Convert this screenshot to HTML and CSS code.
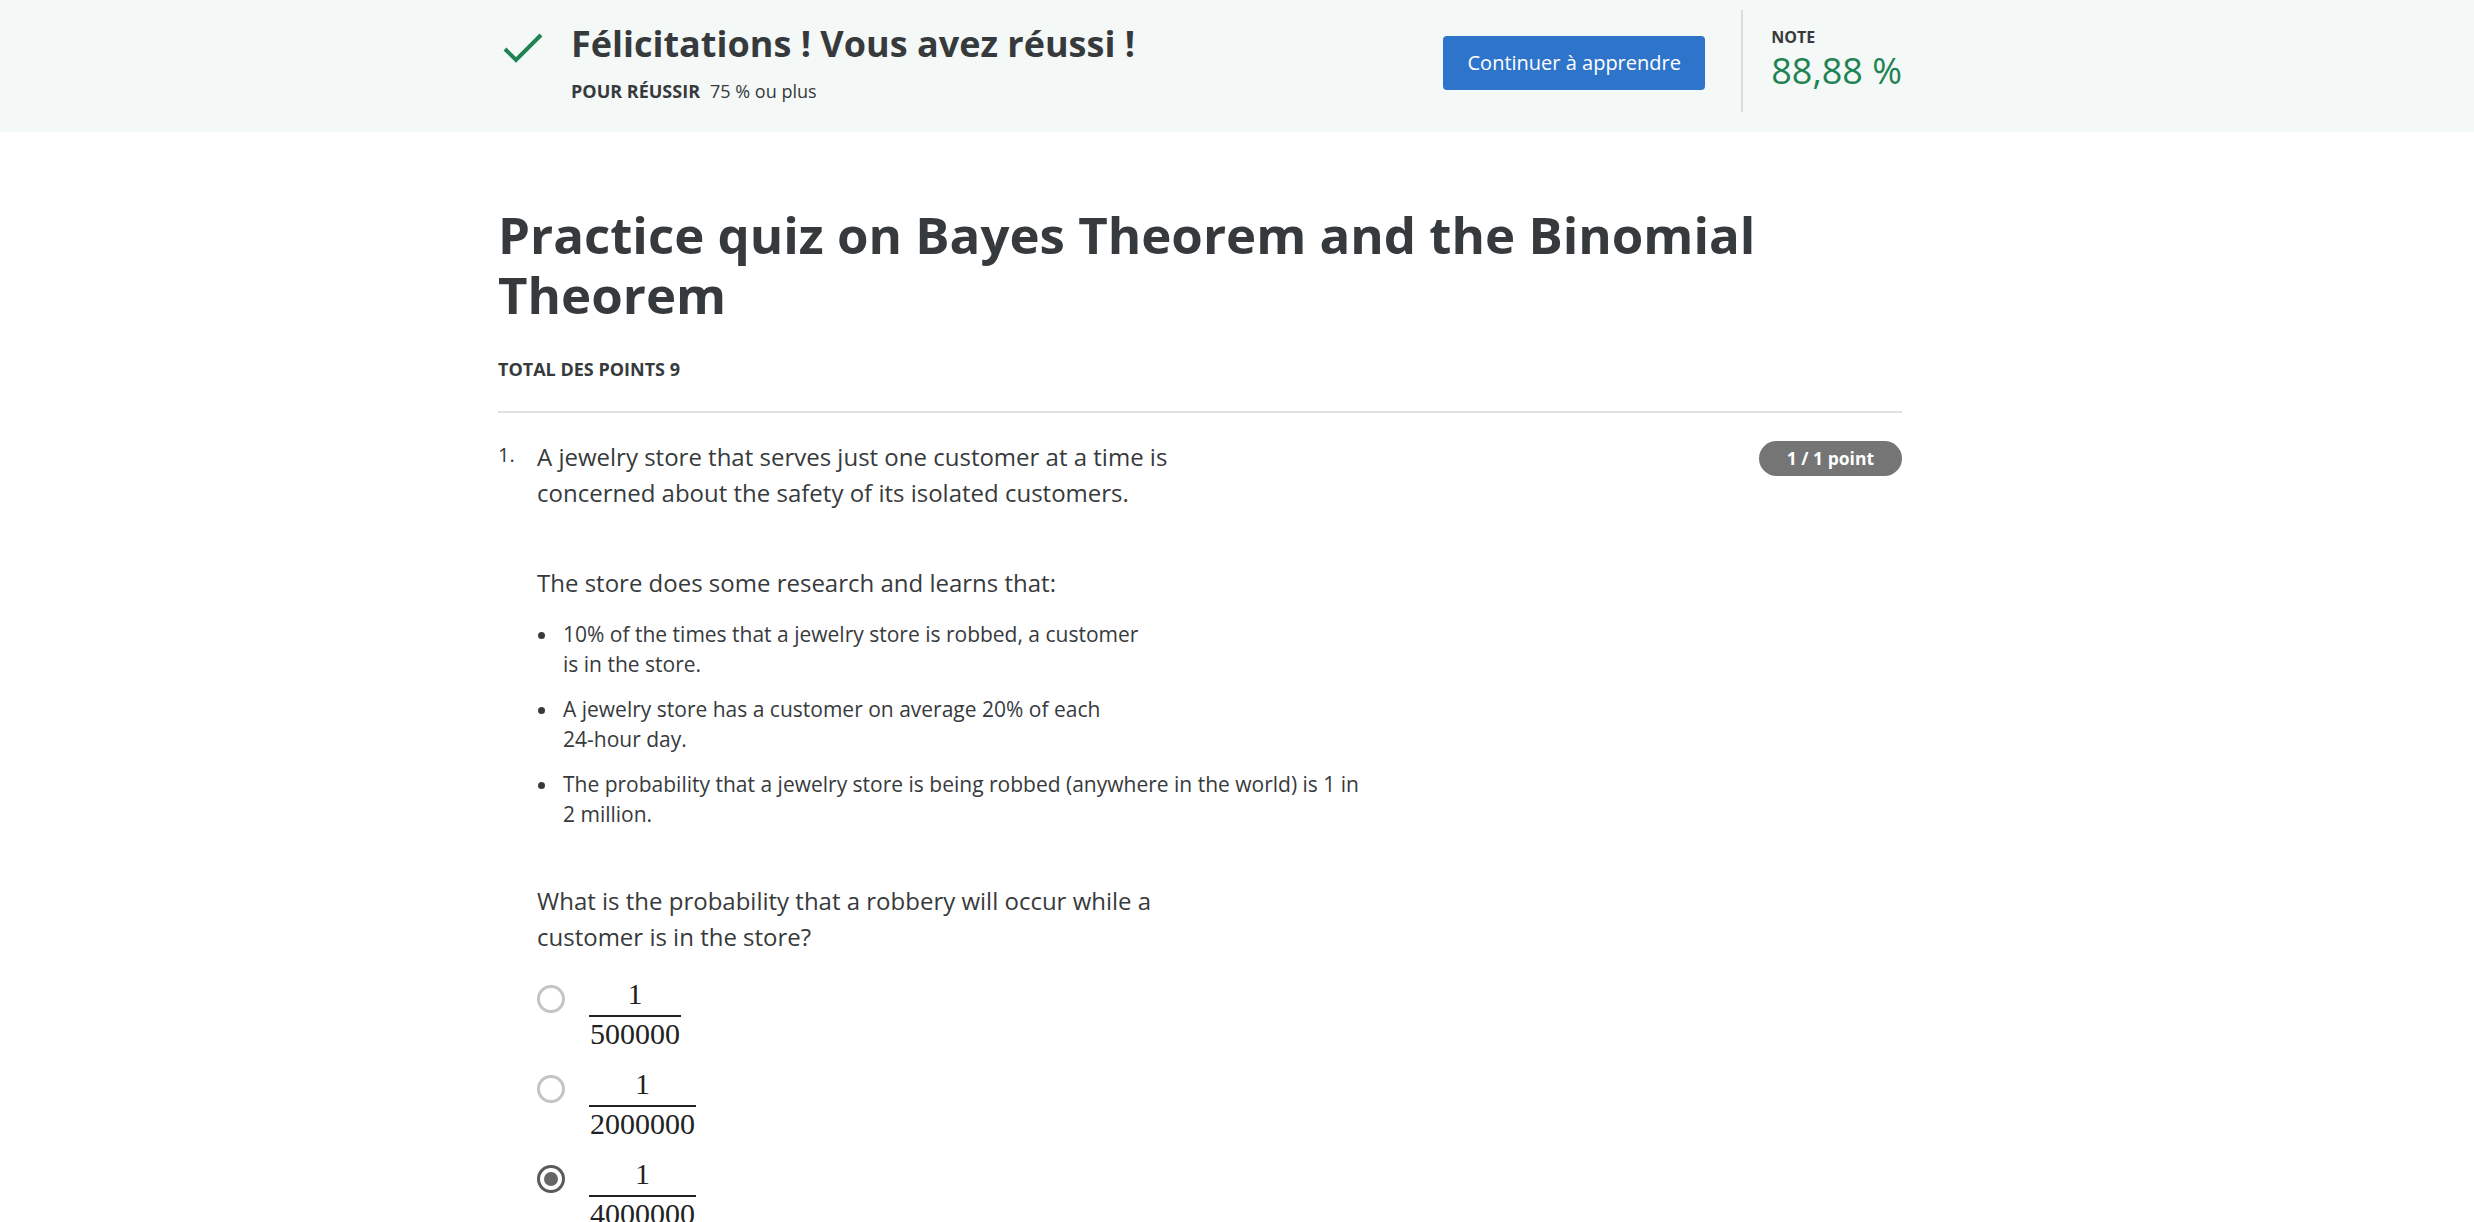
FILE: index.html
```html
<!DOCTYPE html>
<html lang="fr">
<head>
<meta charset="utf-8">
<title>Practice quiz on Bayes Theorem and the Binomial Theorem</title>
<link rel="stylesheet" href="styles.css">
</head>
<body>
<header class="banner">
  <div class="banner-inner">
    <svg class="check" viewBox="0 0 40 30" width="40" height="30" aria-hidden="true">
      <path d="M2 16 L13 27 L38 2" fill="none" stroke="#1f8354" stroke-width="4"/>
    </svg>
    <div class="result">
      <h2 class="result-title">Félicitations ! Vous avez réussi !</h2>
      <div class="result-sub"><span class="pass-label">POUR RÉUSSIR</span><span class="pass-value">75 % ou plus</span></div>
    </div>
    <div class="actions">
      <button class="btn-primary" type="button">Continuer à apprendre</button>
      <div class="grade">
        <div class="grade-label">NOTE</div>
        <div class="grade-value">88,88 %</div>
      </div>
    </div>
  </div>
</header>

<main class="content">
  <h1 class="quiz-title">Practice quiz on Bayes Theorem and the Binomial Theorem</h1>
  <div class="total">TOTAL DES POINTS 9</div>
  <hr class="rule">

  <section class="question">
    <div class="q-num">1.</div>
    <div class="q-body">
      <p class="q-text">A jewelry store that serves just one customer at a time is<br>concerned about the safety of its isolated customers.</p>
      <p class="q-text q-gap">The store does some research and learns that:</p>
      <ul class="facts">
        <li>10% of the times that a jewelry store is robbed, a customer<br>is in the store.</li>
        <li>A jewelry store has a customer on average 20% of each<br>24-hour day.</li>
        <li>The probability that a jewelry store is being robbed (anywhere in the world) is 1 in<br>2 million.</li>
      </ul>
      <p class="q-text q-ask">What is the probability that a robbery will occur while a<br>customer is in the store?</p>
      <div class="options">
        <label class="option"><span class="radio"></span><span class="frac"><span class="num">1</span><span class="den">500000</span></span></label>
        <label class="option"><span class="radio"></span><span class="frac"><span class="num">1</span><span class="den">2000000</span></span></label>
        <label class="option"><span class="radio checked"></span><span class="frac"><span class="num">1</span><span class="den">4000000</span></span></label>
      </div>
    </div>
    <div class="points">1 / 1 point</div>
  </section>
</main>
</body>
</html>
```
FILE: styles.css
```css
html, body {
  margin: 0;
  padding: 0;
  background: #ffffff;
}
body {
  font-family: "Open Sans", "Noto Sans", sans-serif;
  color: #373a3c;
  overflow: hidden;
  height: 1222px;
}

.banner {
  background: #f4f8f7;
  height: 132px;
}
.banner-inner {
  margin-left: 498px;
  width: 1404px;
  display: flex;
  align-items: flex-start;
}
.check {
  margin-top: 33px;
  margin-left: 5px;
  flex: none;
}
.result {
  margin-left: 28px;
  padding-top: 22px;
}
.result-title {
  margin: 0;
  font-size: 36px;
  line-height: 44px;
  font-weight: 700;
}
.result-sub {
  margin-top: 12px;
  font-size: 18px;
  line-height: 26px;
}
.pass-label {
  font-weight: 700;
  font-size: 18px;
  margin-right: 10px;
}
.actions {
  margin-left: auto;
  display: flex;
  align-items: flex-start;
}
.btn-primary {
  margin-top: 36px;
  height: 54px;
  width: 262px;
  background: #2f74cb;
  color: #ffffff;
  border: none;
  border-radius: 4px;
  font-family: "Open Sans", sans-serif;
  font-size: 20px;
  line-height: 54px;
  padding: 0;
}
.grade {
  margin-left: 36px;
  margin-top: 10px;
  height: 102px;
  border-left: 2px solid #dcdcdc;
  padding-left: 28px;
  padding-top: 17px;
  box-sizing: border-box;
}
.grade-label {
  font-size: 16px;
  line-height: 20px;
  font-weight: 700;
}
.grade-value {
  margin-top: 2px;
  font-size: 36px;
  line-height: 44px;
  color: #1f8354;
}

.content {
  margin-left: 498px;
  width: 1404px;
  padding-top: 72px;
}
.quiz-title {
  margin: 0;
  font-size: 51px;
  line-height: 60px;
  font-weight: 700;
}
.total {
  margin-top: 33px;
  font-size: 18px;
  line-height: 24px;
  font-weight: 700;
}
.rule {
  margin: 30px 0 0;
  border: none;
  border-top: 2px solid #e1e1e1;
  height: 0;
}

.question {
  margin-top: 26px;
  display: flex;
  align-items: flex-start;
}
.q-num {
  width: 39px;
  flex: none;
  font-size: 20px;
  line-height: 36px;
  margin-top: -2px;
}
.q-body {
  flex: 1;
}
.q-text {
  margin: 0;
  font-size: 24px;
  line-height: 36px;
}
.q-gap {
  margin-top: 54px;
}
.facts {
  list-style: none;
  margin: 18px 0 0;
  padding: 0;
}
.facts li {
  display: flex;
  font-size: 21px;
  line-height: 30px;
}
.facts li + li {
  margin-top: 15px;
}
.facts li::before {
  content: "";
  flex: none;
  width: 7px;
  height: 7px;
  border-radius: 50%;
  background: #373a3c;
  margin: 13px 18px 0 1px;
}
.q-ask {
  margin-top: 54px;
}
.options {
  margin-top: 24px;
  display: flex;
  flex-direction: column;
  gap: 20px;
}
.option {
  display: flex;
  align-items: flex-start;
}
.radio {
  flex: none;
  width: 28px;
  height: 28px;
  box-sizing: border-box;
  border: 3px solid #c4c4c4;
  border-radius: 50%;
  margin-top: 6px;
  margin-right: 24px;
  display: flex;
  align-items: center;
  justify-content: center;
}
.radio.checked {
  border-color: #5a5a5a;
}
.radio.checked::after {
  content: "";
  width: 14px;
  height: 14px;
  border-radius: 50%;
  background: #666666;
}
.frac {
  display: inline-flex;
  flex-direction: column;
  align-items: center;
  font-family: "Liberation Serif", "Times New Roman", serif;
  font-size: 30px;
  line-height: 30px;
  color: #222;
}
.num {
  padding: 0 1px 6px;
  border-bottom: 2px solid #222;
  align-self: stretch;
  text-align: center;
}
.den {
  padding: 2px 1px 0;
}

.points {
  flex: none;
  margin-top: 2px;
  height: 35px;
  padding: 0 28px;
  border-radius: 18px;
  background: #757575;
  color: #ffffff;
  font-size: 17.5px;
  font-weight: 700;
  line-height: 35px;
}
```
